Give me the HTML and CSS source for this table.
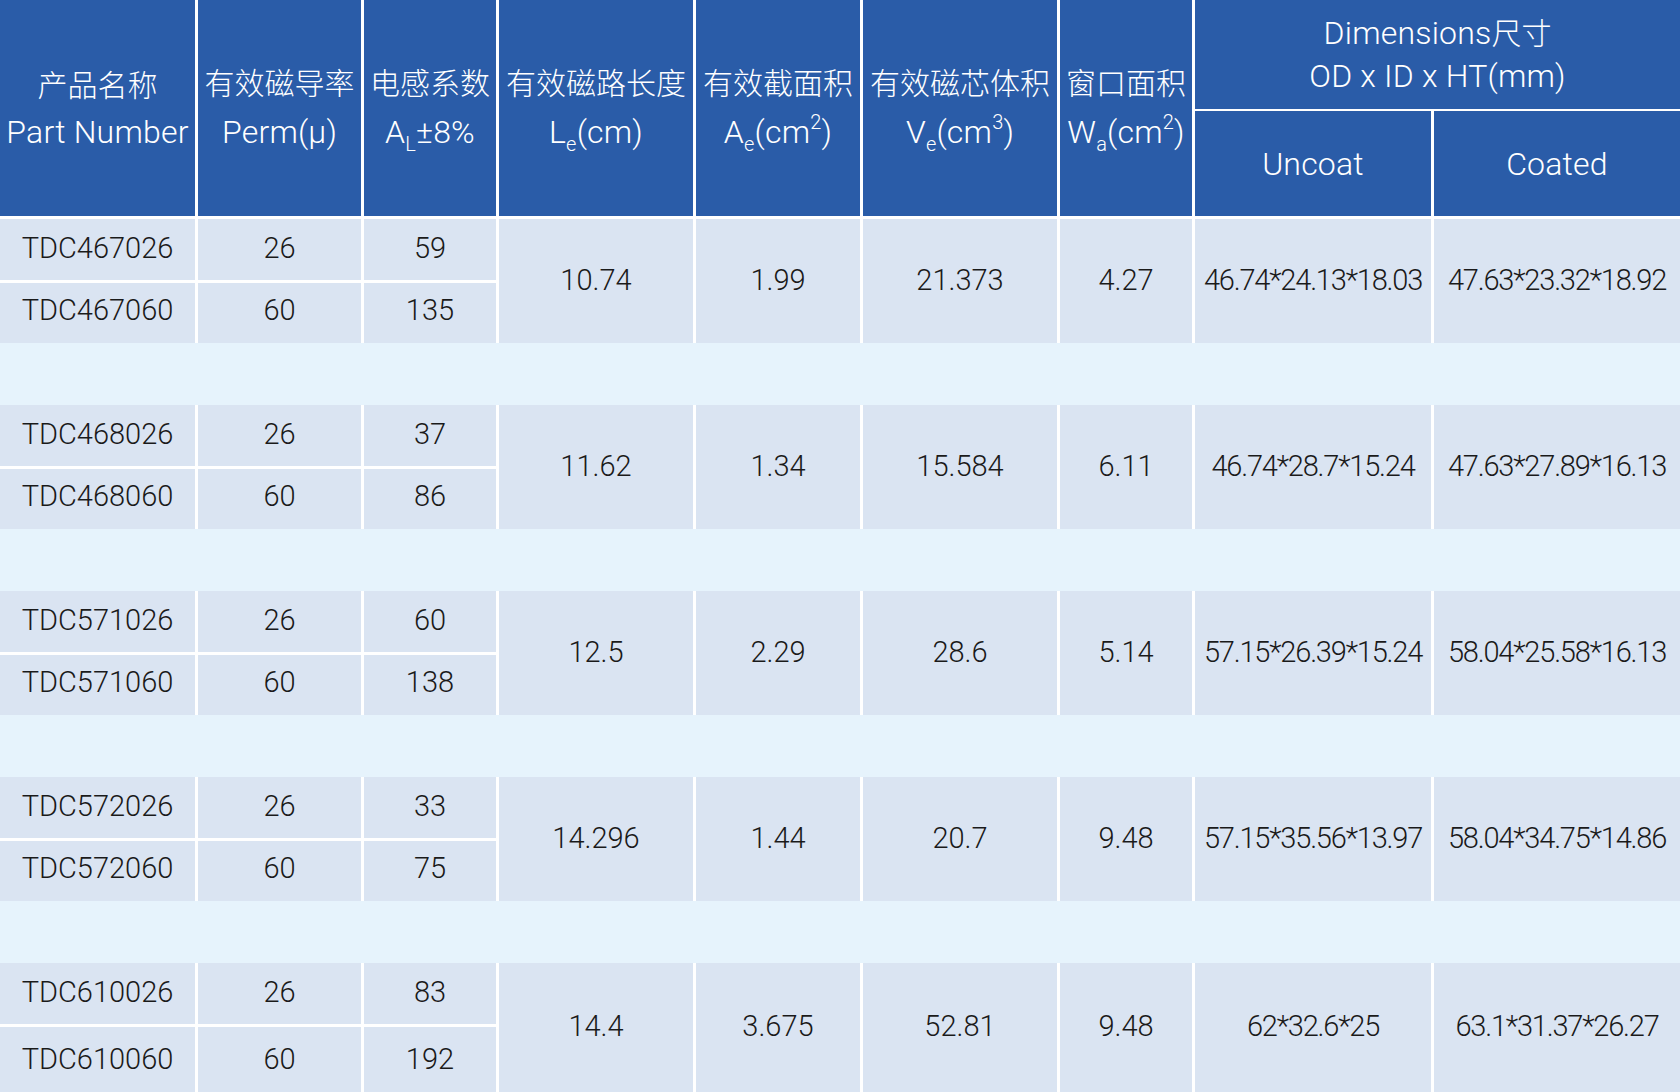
FILE: index.html
```html
<!DOCTYPE html>
<html lang="zh-CN">
<head>
<meta charset="utf-8">
<title>TDC</title>
<link rel="stylesheet" href="styles.css">
</head>
<body>
<table class="spec">
  <colgroup>
    <col class="c1"><col class="c2"><col class="c3"><col class="c4"><col class="c5"><col class="c6"><col class="c7"><col class="c8"><col class="c9">
  </colgroup>
  <thead>
    <tr class="h1">
      <th rowspan="2" class="hd"><div class="l cn first">产品名称</div><div class="l en">Part Number</div></th>
      <th rowspan="2" class="hd"><div class="l cn">有效磁导率</div><div class="l en">Perm(μ)</div></th>
      <th rowspan="2" class="hd"><div class="l cn">电感系数</div><div class="l en">A<sub>L</sub>±8%</div></th>
      <th rowspan="2" class="hd"><div class="l cn">有效磁路长度</div><div class="l en">L<sub>e</sub>(cm)</div></th>
      <th rowspan="2" class="hd"><div class="l cn">有效截面积</div><div class="l en">A<sub>e</sub>(cm<sup>2</sup>)</div></th>
      <th rowspan="2" class="hd"><div class="l cn">有效磁芯体积</div><div class="l en">V<sub>e</sub>(cm<sup>3</sup>)</div></th>
      <th rowspan="2" class="hd"><div class="l cn">窗口面积</div><div class="l en">W<sub>a</sub>(cm<sup>2</sup>)</div></th>
      <th colspan="2" class="hd dim"><div class="dl en">Dimensions<span class="cn">尺寸</span></div><div class="dl en">OD x ID x HT(mm)</div></th>
    </tr>
    <tr class="h2">
      <th class="hd sub">Uncoat</th>
      <th class="hd sub last">Coated</th>
    </tr>
  </thead>
  <tbody>
    <tr class="r1"><td class="pn">TDC467026</td><td>26</td><td>59</td><td rowspan="2">10.74</td><td rowspan="2">1.99</td><td rowspan="2">21.373</td><td rowspan="2">4.27</td><td rowspan="2" class="dm">46.74*24.13*18.03</td><td rowspan="2" class="dm last">47.63*23.32*18.92</td></tr>
    <tr class="r2"><td class="pn">TDC467060</td><td>60</td><td>135</td></tr>
    <tr class="gap"><td colspan="9"></td></tr>

    <tr class="r1"><td class="pn">TDC468026</td><td>26</td><td>37</td><td rowspan="2">11.62</td><td rowspan="2">1.34</td><td rowspan="2">15.584</td><td rowspan="2">6.11</td><td rowspan="2" class="dm">46.74*28.7*15.24</td><td rowspan="2" class="dm last">47.63*27.89*16.13</td></tr>
    <tr class="r2"><td class="pn">TDC468060</td><td>60</td><td>86</td></tr>
    <tr class="gap"><td colspan="9"></td></tr>

    <tr class="r1"><td class="pn">TDC571026</td><td>26</td><td>60</td><td rowspan="2">12.5</td><td rowspan="2">2.29</td><td rowspan="2">28.6</td><td rowspan="2">5.14</td><td rowspan="2" class="dm">57.15*26.39*15.24</td><td rowspan="2" class="dm last">58.04*25.58*16.13</td></tr>
    <tr class="r2"><td class="pn">TDC571060</td><td>60</td><td>138</td></tr>
    <tr class="gap"><td colspan="9"></td></tr>

    <tr class="r1"><td class="pn">TDC572026</td><td>26</td><td>33</td><td rowspan="2">14.296</td><td rowspan="2">1.44</td><td rowspan="2">20.7</td><td rowspan="2">9.48</td><td rowspan="2" class="dm">57.15*35.56*13.97</td><td rowspan="2" class="dm last">58.04*34.75*14.86</td></tr>
    <tr class="r2"><td class="pn">TDC572060</td><td>60</td><td>75</td></tr>
    <tr class="gap"><td colspan="9"></td></tr>

    <tr class="r1"><td class="pn">TDC610026</td><td>26</td><td>83</td><td rowspan="2">14.4</td><td rowspan="2">3.675</td><td rowspan="2">52.81</td><td rowspan="2">9.48</td><td rowspan="2" class="dm">62*32.6*25</td><td rowspan="2" class="dm last">63.1*31.37*26.27</td></tr>
    <tr class="r2 end"><td class="pn">TDC610060</td><td>60</td><td>192</td></tr>
  </tbody>
</table>
</body>
</html>
```
FILE: styles.css
```css
html, body {
  margin: 0;
  padding: 0;
  background: #dae4f2;
}

.spec {
  width: 1680px;
  table-layout: fixed;
  border-collapse: separate;
  border-spacing: 0;
  font-family: "Roboto", "Noto Sans CJK SC", sans-serif;
  font-weight: 300;
  color: #1a1a1a;
}

.c1 { width: 198px; }
.c2 { width: 166px; }
.c3 { width: 135px; }
.c4 { width: 197px; }
.c5 { width: 167px; }
.c6 { width: 197px; }
.c7 { width: 135px; }
.c8 { width: 239px; }
.c9 { width: 246px; }

th, td {
  padding: 0;
  text-align: center;
  vertical-align: middle;
  white-space: nowrap;
  overflow: hidden;
}

.hd {
  background: #2a5ca8;
  color: #ffffff;
  font-weight: 300;
  border-right: 3px solid #ffffff;
  border-bottom: 3px solid #ffffff;
}

.l {
  height: 48px;
  line-height: 48px;
}
.l.cn { line-height: 42px; }
.l.first { line-height: 46px; }

.dl {
  height: 45px;
  line-height: 45px;
}

.cn {
  font-family: "Noto Sans CJK SC", sans-serif;
  font-size: 30px;
  font-weight: 300;
}

.en {
  font-size: 32px;
  letter-spacing: 0.2px;
}
.en .cn { letter-spacing: 0; }

.hd sub, .hd sup {
  font-size: 20px;
  line-height: 0;
}
.hd sub { vertical-align: -8px; }
.hd sup { vertical-align: 14px; }

.h1 { height: 111px; }
.h1 .dim {
  border-right: 0;
  border-bottom-width: 2px;
  padding-top: 0;
  padding-bottom: 2px;
}
.h2 { height: 108px; }
.sub { font-size: 32px; letter-spacing: 0.2px; }
.hd.last { border-right: 0; }

td {
  background: #dae4f2;
  font-size: 29px;
  border-right: 3px solid #ffffff;
  padding-bottom: 3px;
}
td.last { border-right: 0; }
td.dm { letter-spacing: -1.2px; }

.r1 { height: 64px; }
.r1 td.pn, .r1 td:nth-child(2), .r1 td:nth-child(3) {
  border-bottom: 3px solid #ffffff;
}
.r2 { height: 60px; }
.r2 td { padding-bottom: 7px; }
.r2.end { height: 65px; }
.r2.end td { padding-bottom: 1px; }

.gap { height: 62px; }
.gap td {
  background: #e6f3fc;
  border-right: 0;
  padding: 0;
}
```
